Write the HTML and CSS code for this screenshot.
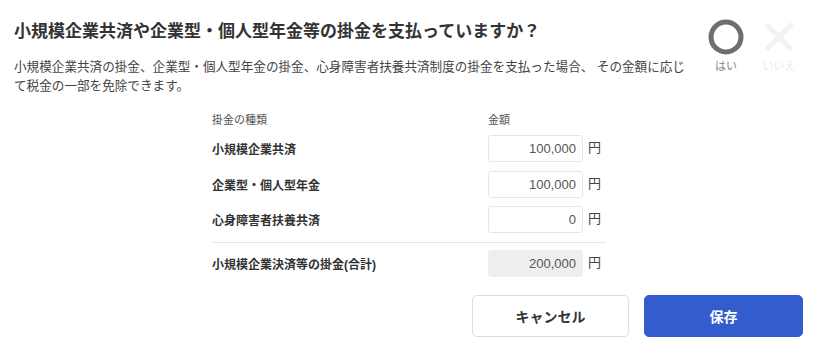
FILE: index.html
```html
<!DOCTYPE html>
<html lang="ja">
<head>
<meta charset="utf-8">
<title>掛金</title>
<link rel="stylesheet" href="styles.css">
</head>
<body>
<div class="dialog">
  <div class="head">
    <div class="text">
      <h1 class="title">小規模企業共済や企業型・個人型年金等の掛金を支払っていますか？</h1>
      <p class="desc">小規模企業共済の掛金、企業型・個人型年金の掛金、心身障害者扶養共済制度の掛金を支払った場合、 その金額に応じて税金の一部を免除できます。</p>
    </div>
    <div class="choices">
      <div class="choice on">
        <svg class="icon" width="36" height="36" viewBox="0 0 36 36"><circle cx="18" cy="18" r="15" fill="none" stroke="#6e6e6e" stroke-width="5"/></svg>
        <span class="clabel">はい</span>
      </div>
      <div class="choice off">
        <svg class="icon" width="36" height="36" viewBox="0 0 36 36"><path d="M5 5 L31 31 M31 5 L5 31" stroke="#f2f2f2" stroke-width="5" stroke-linecap="butt" fill="none"/></svg>
        <span class="clabel">いいえ</span>
      </div>
    </div>
  </div>

  <div class="form">
    <div class="row hdr">
      <span class="lab">掛金の種類</span>
      <span class="amt">金額</span>
    </div>
    <div class="row">
      <span class="lab b">小規模企業共済</span>
      <span class="input">100,000</span>
      <span class="yen">円</span>
    </div>
    <div class="row">
      <span class="lab b">企業型・個人型年金</span>
      <span class="input">100,000</span>
      <span class="yen">円</span>
    </div>
    <div class="row">
      <span class="lab b">心身障害者扶養共済</span>
      <span class="input">0</span>
      <span class="yen">円</span>
    </div>
    <div class="divider"></div>
    <div class="row last">
      <span class="lab b">小規模企業決済等の掛金(合計)</span>
      <span class="input total">200,000</span>
      <span class="yen">円</span>
    </div>
  </div>

  <div class="buttons">
    <button class="btn cancel">キャンセル</button>
    <button class="btn save">保存</button>
  </div>
</div>
</body>
</html>
```
FILE: styles.css
```css
html, body {
  margin: 0;
  padding: 0;
  background: #ffffff;
}
body {
  font-family: "Liberation Sans", "Noto Sans CJK JP", sans-serif;
  color: #333333;
}
.dialog {
  width: 820px;
  height: 351px;
  box-sizing: border-box;
  padding: 19px 17px 0 14px;
}
.head {
  display: flex;
  justify-content: space-between;
}
.text {
  width: 676px;
}
.title {
  margin: 0;
  padding-top: 1px;
  font-size: 17px;
  line-height: 24px;
  font-weight: bold;
  color: #333333;
}
.desc {
  margin: 14px 0 0 0;
  font-size: 12.6px;
  line-height: 19px;
  color: #444444;
}
.choices {
  display: flex;
  gap: 17px;
  margin-right: 6px;
}
.choice {
  display: flex;
  flex-direction: column;
  align-items: center;
  width: 36px;
}
.icon {
  display: block;
}
.clabel {
  margin-top: 4px;
  font-size: 11px;
  line-height: 14px;
  white-space: nowrap;
}
.on .clabel { color: #888888; }
.off .clabel { color: #ececec; }

.form {
  margin: 15px 0 0 198px;
  width: 394px;
}
.row {
  display: grid;
  grid-template-columns: 276px 95px auto;
  align-items: center;
  height: 27px;
  margin-bottom: 8.5px;
}
.row.last {
  margin-bottom: 0;
}
.row.hdr {
  height: 14px;
  margin-bottom: 10px;
}
.hdr span {
  font-size: 11px;
  color: #555555;
}
.lab {
  font-size: 12px;
  color: #333333;
}
.lab.b {
  font-weight: bold;
}
.input {
  box-sizing: border-box;
  height: 27px;
  border: 1px solid #e6e6e6;
  border-radius: 3px;
  text-align: right;
  padding: 0 6px;
  font-size: 13px;
  line-height: 25px;
  color: #555555;
  background: #ffffff;
}
.input.total {
  background: #eeeeee;
  border-color: #eeeeee;
}
.yen {
  padding-left: 5px;
  font-size: 13px;
  color: #444444;
  align-self: start;
  margin-top: 2px;
}
.divider {
  height: 1px;
  background: #e6e6e6;
  margin: 1.5px 0 7px 0;
}
.buttons {
  display: flex;
  justify-content: flex-end;
  gap: 15px;
  margin-top: 18px;
}
.btn {
  height: 42px;
  border-radius: 5px;
  font-family: "Liberation Sans", "Noto Sans CJK JP", sans-serif;
  font-size: 14px;
  font-weight: bold;
  cursor: pointer;
}
.cancel {
  width: 157px;
  background: #ffffff;
  border: 1px solid #dddddd;
  color: #333333;
}
.save {
  width: 159px;
  background: #335ccc;
  border: 1px solid #335ccc;
  color: #ffffff;
}
```
